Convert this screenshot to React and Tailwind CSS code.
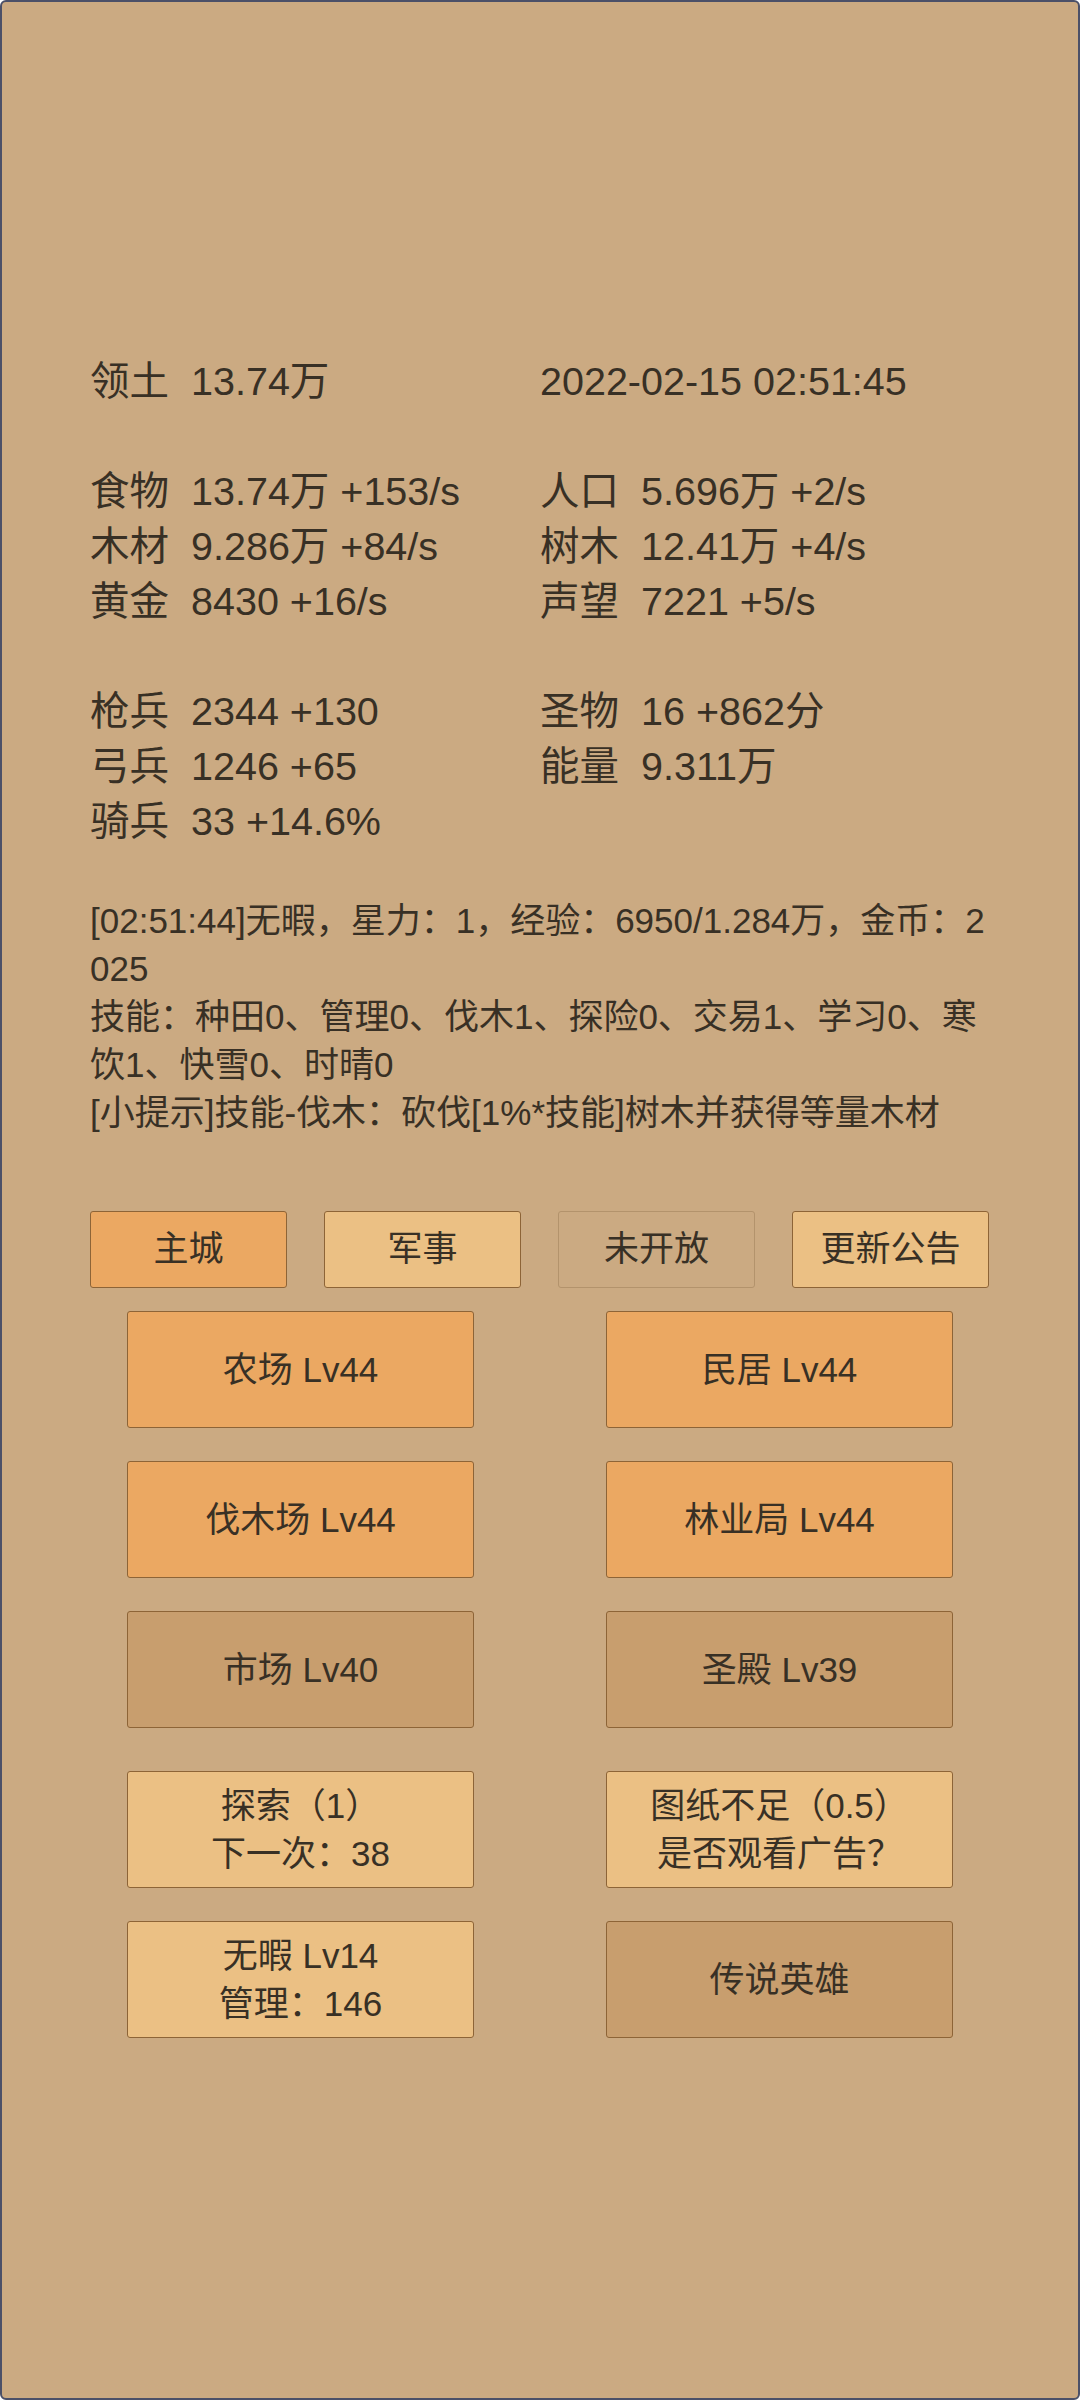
import React from "react";

const FONT = { fontFamily: '"Liberation Sans", "Noto Sans CJK SC", sans-serif' };

function Stat({ label, value }) {
  return (
    <div className="flex h-[55px] items-center">
      {label ? <span className="w-[101px] shrink-0">{label}</span> : null}
      <span>{value}</span>
    </div>
  );
}

function Blank() {
  return <div className="h-[55px]" />;
}

function Tab({ children, tone }) {
  const cls =
    tone === "active"
      ? "bg-[#eba862] border-[#8d6437]"
      : tone === "off"
      ? "bg-[#cbaa82] border-[#b3936c]"
      : "bg-[#ebc084] border-[#8d6437]";
  return (
    <div
      className={
        "w-[197px] h-[77px] flex items-center justify-center border rounded-[3px] text-[35px] " +
        cls
      }
    >
      {children}
    </div>
  );
}

function Btn({ lines, tone }) {
  const cls =
    tone === "orange"
      ? "bg-[#eba862]"
      : tone === "tan"
      ? "bg-[#c89e6e]"
      : "bg-[#ebc084]";
  return (
    <div
      className={
        "w-[347px] h-[117px] flex flex-col items-center justify-center border border-[#8d6437] rounded-[3px] text-[35px] leading-[48px] " +
        cls
      }
    >
      {lines.map((l, i) => (
        <div key={i}>{l}</div>
      ))}
    </div>
  );
}

function Row({ children, className = "" }) {
  return <div className={"flex justify-center gap-[132px] " + className}>{children}</div>;
}

export default function App() {
  return (
    <div
      style={FONT}
      className="w-[1080px] h-[2400px] bg-[#cbaa82] border-2 border-[#4b5068] rounded-[6px] text-[#383025] overflow-hidden"
    >
      <div className="pt-[352px] px-[88px]">
        <div className="grid grid-cols-2 w-[900px] text-[39.5px] leading-[55px]">
          <div>
            <Stat label="领土" value="13.74万" />
            <Blank />
            <Stat label="食物" value="13.74万 +153/s" />
            <Stat label="木材" value="9.286万 +84/s" />
            <Stat label="黄金" value="8430 +16/s" />
            <Blank />
            <Stat label="枪兵" value="2344 +130" />
            <Stat label="弓兵" value="1246 +65" />
            <Stat label="骑兵" value="33 +14.6%" />
          </div>
          <div>
            <Stat value="2022-02-15 02:51:45" />
            <Blank />
            <Stat label="人口" value="5.696万 +2/s" />
            <Stat label="树木" value="12.41万 +4/s" />
            <Stat label="声望" value="7221 +5/s" />
            <Blank />
            <Stat label="圣物" value="16 +862分" />
            <Stat label="能量" value="9.311万" />
            <Blank />
          </div>
        </div>

        <div className="mt-[48px] w-[900px] text-[35px] leading-[48px] break-all">
          <div>[02:51:44]无暇，星力：1，经验：6950/1.284万，金币：2025</div>
          <div>技能：种田0、管理0、伐木1、探险0、交易1、学习0、寒饮1、快雪0、时晴0</div>
          <div>[小提示]技能-伐木：砍伐[1%*技能]树木并获得等量木材</div>
        </div>

        <div className="mt-[74px] flex gap-[37px]">
          <Tab tone="active">主城</Tab>
          <Tab>军事</Tab>
          <Tab tone="off">未开放</Tab>
          <Tab>更新公告</Tab>
        </div>
      </div>

      <div className="mt-[23px] flex flex-col">
        <Row>
          <Btn tone="orange" lines={["农场 Lv44"]} />
          <Btn tone="orange" lines={["民居 Lv44"]} />
        </Row>
        <Row className="mt-[33px]">
          <Btn tone="orange" lines={["伐木场 Lv44"]} />
          <Btn tone="orange" lines={["林业局 Lv44"]} />
        </Row>
        <Row className="mt-[33px]">
          <Btn tone="tan" lines={["市场 Lv40"]} />
          <Btn tone="tan" lines={["圣殿 Lv39"]} />
        </Row>
        <Row className="mt-[43px]">
          <Btn tone="light" lines={["探索（1）", "下一次：38"]} />
          <Btn tone="light" lines={["图纸不足（0.5）", "是否观看广告？"]} />
        </Row>
        <Row className="mt-[33px]">
          <Btn tone="light" lines={["无暇 Lv14", "管理：146"]} />
          <Btn tone="tan" lines={["传说英雄"]} />
        </Row>
      </div>
    </div>
  );
}
